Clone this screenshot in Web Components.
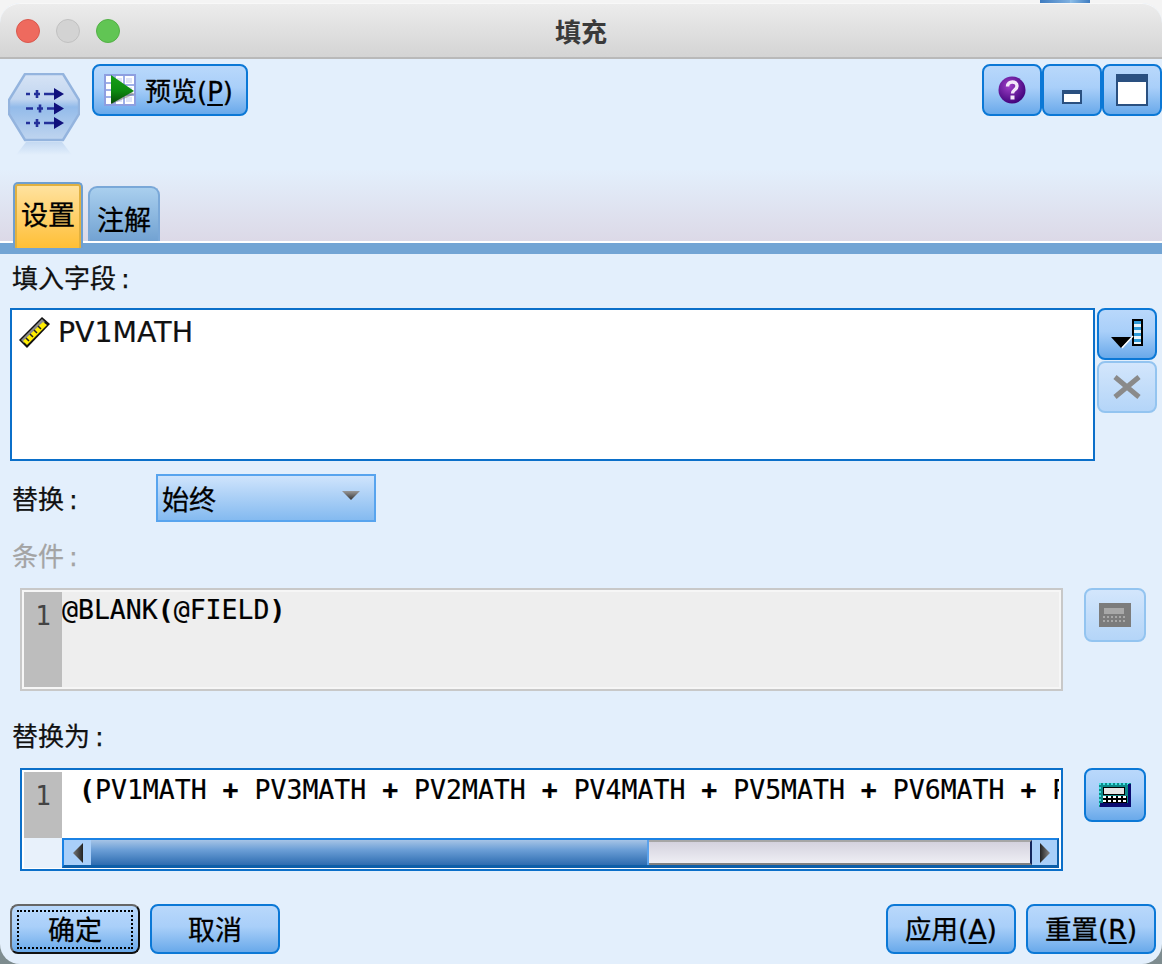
<!DOCTYPE html>
<html lang="zh">
<head>
<meta charset="utf-8">
<title>填充</title>
<style>
  html, body { margin: 0; padding: 0; }
  body {
    width: 1162px; height: 964px; overflow: hidden;
    font-family: "DejaVu Sans", "Noto Sans CJK SC", sans-serif;
    background:
      linear-gradient(90deg, #3f7cc0, #7fb0e0) 1040px 0 / 30px 3px no-repeat,
      linear-gradient(90deg, #8fc0ea, #3f7cc0) 1070px 0 / 20px 3px no-repeat,
      linear-gradient(#f4f4f4 0, #f4f4f4 30px, #8a9a9e 900px, #7d8b8e 100%);
  }
</style>
</head>
<body>

<template id="icon-preview">
  <svg width="32" height="32" viewBox="0 0 32 32" shape-rendering="crispEdges">
    <rect width="32" height="32" fill="#8e9fe0"/>
    <rect x="2" y="2" width="28" height="28" fill="#fff"/>
    <path d="M2 8h6v2H2zM2 15h6v2H2zM2 22h6v2H2zM10 2h2v28h-2zM19 2h2v28h-2zM12 10h18v2H12zM12 20h18v2H12zM8 2h2v28H8z" fill="#9fb0e8"/>
    <path d="M13 4h5v5h-5zM22 4h6v5h-6zM13 23h5v5h-5zM22 23h6v5h-6zM22 13h6v5h-6z" fill="#dfe4f8"/>
    <defs><linearGradient id="pg" x1="0" y1="0" x2="0" y2="1"><stop offset="0" stop-color="#17a017"/><stop offset=".55" stop-color="#0c8a10"/><stop offset="1" stop-color="#084a08"/></linearGradient></defs>
    <path d="M8 8 L31 20 L8 30 Z" fill="#777" opacity=".55" shape-rendering="auto"/>
    <path d="M7 1 L30 17 L7 30 Z" fill="url(#pg)" shape-rendering="auto"/>
  </svg>
</template>

<script>
const UI_FONT = '"DejaVu Sans", "Noto Sans CJK SC", sans-serif';

function icon(id) {
  return document.getElementById(id).innerHTML;
}

// 通用按钮，圆角蓝色渐变，带 disabled / focused 状态
class FxButton extends HTMLElement {
  constructor() {
    super();
    this.attachShadow({ mode: 'open' });
    this.shadowRoot.innerHTML = `
      <style>
        :host {
          display: inline-flex;
          box-sizing: border-box;
          width: var(--w, 130px);
          height: var(--h, 50px);
          flex: none;
          align-items: center;
          justify-content: center;
          gap: 6px;
          border: 2px solid #0b78d6;
          border-radius: 8px;
          background: linear-gradient(#b9d8fb, #a9cff9 45%, #69a9ea);
          color: #000;
          font: 27px/1 ${UI_FONT};
          -webkit-text-stroke: .3px #000;
          position: relative;
        }
        :host([disabled]) {
          border-color: #93c4f0;
          background: linear-gradient(#d3e6fc, #b4d5f8);
        }
        :host([focused]) {
          border-color: #666 #111 #111 #666;
        }
        :host([focused])::after {
          content: '';
          position: absolute;
          inset: 4px 5px 3px 5px;
          border: 2px dotted #000;
        }
      </style>
      <slot></slot>`;
  }
}
customElements.define('fx-button', FxButton);

class FxTitlebar extends HTMLElement {
  constructor() {
    super();
    this.attachShadow({ mode: 'open' });
    this.shadowRoot.innerHTML = `
      <style>
        :host {
          display: flex;
          box-sizing: border-box;
          height: 56px;
          flex: none;
          align-items: center;
          position: relative;
          background: linear-gradient(#ececec, #d4d4d4);
          border-top: 1px solid #f8f8f8;
          border-bottom: 2px solid #b9b9b9;
          border-radius: 20px 20px 0 0;
          padding-left: 16px;
          gap: 16px;
        }
        .dot { width: 24px; height: 24px; border-radius: 50%; box-sizing: border-box; margin-top: 1px; }
        .close { background: #ee6a5e; border: 1px solid #d9584d; }
        .min { background: #d3d3d3; border: 1px solid #c0c0c0; }
        .max { background: #61c554; border: 1px solid #53b046; }
        .title {
          position: absolute;
          left: 0; right: 0; top: 0; bottom: 0;
          display: flex; align-items: center; justify-content: center;
          font: 700 26px/1 "Noto Sans CJK SC", sans-serif;
          color: #3a3a3a;
        }
      </style>
      <span class="dot close"></span><span class="dot min"></span><span class="dot max"></span>
      <div class="title"><slot></slot></div>`;
  }
}
customElements.define('fx-titlebar', FxTitlebar);

class FxToolbar extends HTMLElement {
  constructor() {
    super();
    this.attachShadow({ mode: 'open' });
    this.shadowRoot.innerHTML = `
      <style>
        :host {
          display: flex;
          box-sizing: border-box;
          height: 110px;
          flex: none;
          padding: 5px 0 0 8px;
        }
        .node { margin-top: 9px; margin-right: 12px; flex: none; filter: blur(.5px); }
        .spacer { flex: 1; }
        fx-button { --h: 52px; --w: 60px; }
        fx-button.preview { --w: 156px; justify-content: flex-start; padding-left: 10px; gap: 9px; font-size: 26px; }
        .group { display: flex; }
        .lbl { white-space: nowrap; margin-top: 4px; }
        u { text-underline-offset: 3px; }
      </style>
      <svg class="node" width="72" height="84" viewBox="0 0 72 84">
        <defs>
          <linearGradient id="hx" x1="0" y1="0" x2="0" y2="1">
            <stop offset="0" stop-color="#d6e3f5"/><stop offset=".38" stop-color="#c2d6f0"/>
            <stop offset=".5" stop-color="#93bbea"/><stop offset="1" stop-color="#c0d5ef"/>
          </linearGradient>
          <linearGradient id="hr" x1="0" y1="0" x2="0" y2="1">
            <stop offset="0" stop-color="#c4d9f2"/><stop offset="1" stop-color="#e3effc"/>
          </linearGradient>
        </defs>
        <path d="M18 69 H54 L64 82 H8 Z" fill="url(#hr)"/>
        <path d="M17 1 H55 L71 27 V41 L55 67 H17 L1 41 V27 Z" fill="url(#hx)" stroke="#94b4de" stroke-width="2.400" stroke-linejoin="round"/>
        <g fill="none" stroke="#24309a" stroke-width="2.600">
          <path d="M18 21h4M26 21h6M29 17v8M36 21h14"/>
          <path d="M18 35.500h7M29 35.500h6M32 31.500v8M39 35.500h11"/>
          <path d="M18 50h4M26 50h6M29 46v8M36 50h14"/>
        </g>
        <path d="M46 15l10 6-10 6zM46 29.500l10 6-10 6zM46 44l10 6-10 6z" fill="#10107c"/>
      </svg>
      <fx-button class="preview">${icon('icon-preview')}<span class="lbl">预览(<u>P</u>)</span></fx-button>
      <div class="spacer"></div>
      <div class="group">
        <fx-button>
          <svg width="28" height="28" viewBox="0 0 28 28">
            <defs><radialGradient id="q" cx=".4" cy=".35" r=".7"><stop offset="0" stop-color="#a040c8"/><stop offset="1" stop-color="#3c0078"/></radialGradient></defs>
            <circle cx="14" cy="14" r="13.500" fill="url(#q)"/>
            <path d="M9.500 10.500c0-6 9.500-6 9.500-.5 0 4-4.500 3.500-4.500 7.500" fill="none" stroke="#f4e8fa" stroke-width="3.400"/>
            <rect x="12.500" y="19.500" width="4" height="4" fill="#f4e8fa"/>
          </svg>
        </fx-button>
        <fx-button style="align-items:flex-end;padding-bottom:10px">
          <svg width="20" height="14" viewBox="0 0 20 14" shape-rendering="crispEdges"><rect width="20" height="14" fill="#2a5080"/><rect x="2" y="4" width="16" height="8" fill="#fff"/></svg>
        </fx-button>
        <fx-button>
          <svg width="32" height="32" viewBox="0 0 32 32" shape-rendering="crispEdges"><rect width="32" height="32" fill="#2a5080"/><rect x="2" y="8" width="28" height="22" fill="#fff"/></svg>
        </fx-button>
      </div>`;
  }
}
customElements.define('fx-toolbar', FxToolbar);

class FxTabs extends HTMLElement {
  constructor() {
    super();
    this.attachShadow({ mode: 'open' });
    this.shadowRoot.innerHTML = `
      <style>
        :host {
          display: flex;
          flex: none;
          box-sizing: border-box;
          height: 85px;
          align-items: flex-start;
          padding: 13px 0 0 13px;
          gap: 5px;
          background:
            linear-gradient(#72a4d4, #72a4d4) bottom / 100% 11px no-repeat,
            linear-gradient(#fff, #fff) 0 72px / 100% 2px no-repeat,
            linear-gradient(#e3effc 0, #dcd9e7 72px) top / 100% 72px no-repeat;
        }
        .tab {
          box-sizing: border-box;
          display: flex; align-items: center; justify-content: center;
          font: 27px/1 "Noto Sans CJK SC", sans-serif;
          -webkit-text-stroke: .3px #000;
          color: #000;
          position: relative;
        }
        .on {
          width: 70px; height: 66px;
          border: 2px solid #6f9fd0;
          border-bottom: none;
          border-radius: 5px 5px 0 0;
          box-shadow: inset 0 2px 0 #e0b040, inset 2px 0 0 #e0b040, inset -2px 0 0 #e0b040;
          background: linear-gradient(#ffe3a2, #ffbf36);
          padding-bottom: 6px;
        }
        .off {
          width: 72px; height: 55px;
          margin-top: 4px;
          border: 2px solid #7aa8d8;
          border-bottom: none;
          border-radius: 9px 9px 0 0;
          background: linear-gradient(#a9cfee, #72a2d2);
          padding-top: 8px;
        }
      </style>
      <div class="tab on">设置</div>
      <div class="tab off">注解</div>`;
  }
}
customElements.define('fx-tabs', FxTabs);

// 代码编辑框：行号 + 内容
class FxEditor extends HTMLElement {
  constructor() {
    super();
    this.attachShadow({ mode: 'open' });
    this.shadowRoot.innerHTML = `
      <style>
        :host {
          display: grid;
          box-sizing: border-box;
          width: 1043px;
          height: 103px;
          flex: none;
          grid-template-columns: 38px 1fr;
          grid-template-rows: 66px 1fr;
          border: 2px solid #0b6fc9;
          padding: 2px;
          background: #fff;
          font: 26.500px/1 "DejaVu Sans Mono", monospace;
          -webkit-text-stroke: .2px #000;
          color: #000;
          overflow: hidden;
        }
        :host([disabled]) {
          border-color: #c8c8c8;
          background: #eee;
          box-shadow: inset 0 0 0 2px #f6f6f6;
          grid-template-rows: 1fr;
        }
        .gutter {
          background: #bdbdbd;
          color: #444;
          font-size: 26px;
          text-align: center;
          padding-top: 11px;
          box-sizing: border-box;
          -webkit-text-stroke: 0;
        }
        .code {
          white-space: pre;
          overflow: hidden;
          padding: 4px 0 0 var(--pad, 0);
          line-height: 28px;
        }
      </style>
      <div class="gutter">1</div>
      <div class="code"><slot></slot></div>
      <slot name="corner"></slot>
      <slot name="foot"></slot>`;
  }
}
customElements.define('fx-editor', FxEditor);

class FxScrollbar extends HTMLElement {
  constructor() {
    super();
    this.attachShadow({ mode: 'open' });
    this.shadowRoot.innerHTML = `
      <style>
        :host {
          display: flex;
          grid-column: 2;
          box-sizing: border-box;
          height: 30px;
          border-top: 2px solid #1b82e4;
          border-left: 2px solid #1b82e4;
          border-bottom: 3px solid #0d5ea8;
          border-right: 2px solid #0d5ea8;
          background: #e4e4ec;
        }
        .btn {
          width: 27px; flex: none;
          background: #a9cff9;
          display: flex; align-items: center; justify-content: center;
        }
        .thumb {
          width: 558px;
          flex: none;
          box-sizing: border-box;
          border-right: 2px solid #5aa2ec;
          background: linear-gradient(#a6c4e6, #6b9ed6 40%, #2d6cb0);
        }
        .rest {
          flex: 1;
          box-sizing: border-box;
          border-top: 2px solid #a6a6a6;
          border-bottom: 2px solid #808080;
          border-right: 2px solid #14265c;
          background: linear-gradient(#d4d2de, #eeeef4);
        }
      </style>
      <div class="btn">
        <svg width="10" height="20" viewBox="0 0 10 20"><defs><linearGradient id="al" x1="0" x2="1"><stop offset="0" stop-color="#777"/><stop offset="1" stop-color="#222"/></linearGradient></defs><path d="M0 10 10 0V20Z" fill="url(#al)"/></svg>
      </div>
      <div class="thumb"></div>
      <div class="rest"></div>
      <div class="btn" style="width:25px">
        <svg width="10" height="20" viewBox="0 0 10 20"><defs><linearGradient id="ar" x1="0" x2="1"><stop offset="0" stop-color="#222"/><stop offset="1" stop-color="#888"/></linearGradient></defs><path d="M10 10 0 0V20Z" fill="url(#ar)"/></svg>
      </div>`;
  }
}
customElements.define('fx-scrollbar', FxScrollbar);

class FxSelect extends HTMLElement {
  constructor() {
    super();
    this.attachShadow({ mode: 'open' });
    this.shadowRoot.innerHTML = `
      <style>
        :host {
          display: flex;
          box-sizing: border-box;
          width: 220px; height: 48px;
          flex: none;
          align-items: center;
          justify-content: space-between;
          padding: 0 14px 0 4px;
          border: 2px solid #58a4ee;
          background: linear-gradient(#cfe4fc, #84baf0);
          font: 27px/1 "Noto Sans CJK SC", sans-serif;
          -webkit-text-stroke: .3px #000;
          color: #000;
        }
        svg { margin-top: -5px; }
      </style>
      <slot></slot>
      <svg width="18" height="9" viewBox="0 0 18 9"><defs><linearGradient id="dd" x1="0" y1="0" x2="0" y2="1"><stop offset="0" stop-color="#999"/><stop offset="1" stop-color="#333"/></linearGradient></defs><path d="M0 0H18L9 9Z" fill="url(#dd)"/></svg>`;
  }
}
customElements.define('fx-select', FxSelect);

class FxFieldList extends HTMLElement {
  constructor() {
    super();
    this.attachShadow({ mode: 'open' });
    this.shadowRoot.innerHTML = `
      <style>
        :host {
          display: flex;
          box-sizing: border-box;
          width: 1085px; height: 153px;
          flex: none;
          align-items: flex-start;
          border: 2px solid #0b6fc9;
          background: #fff;
          padding: 6px 0 0 6px;
          gap: 8px;
          font: 28.400px/1 "DejaVu Sans", sans-serif;
          -webkit-text-stroke: .2px #111;
          color: #111;
        }
        .txt { margin-top: 3px; }
      </style>
      <svg width="32" height="32" viewBox="0 0 32 32">
        <path d="M1 24 24 1 32 8 9 32Z" fill="#111"/>
        <path d="M3 24 24 3 27 6 6 27Z" fill="#8a8a8a"/>
        <path d="M5 25 25 6 29 9 9 29Z" fill="#ffee00"/>
        <path d="M8 22l3 3M12 18l3 3M16 14l3 3M20 10l3 3" stroke="#222" stroke-width="1.500"/>
      </svg>
      <div class="txt"><slot></slot></div>`;
  }
}
customElements.define('fx-field-list', FxFieldList);

// 整个对话框内容
class FxDialog extends HTMLElement {
  constructor() {
    super();
    this.attachShadow({ mode: 'open' });
    this.shadowRoot.innerHTML = `
      <style>
        :host {
          display: flex;
          flex-direction: column;
          box-sizing: border-box;
          width: 1162px;
          height: 961px;
          margin-top: 3px;
          background: #e3effc;
          border-radius: 20px;
          overflow: hidden;
          font-family: ${UI_FONT};
        }
        .form { flex: 1; display: flex; flex-direction: column; padding: 0 6px 0 0; }
        .label { font-size: 26px; line-height: 40px; height: 40px; color: #111; -webkit-text-stroke: .25px #111; padding-left: 12px; flex: none; white-space: nowrap; }
        .label.off { color: #a4a4a4; -webkit-text-stroke: .25px #a4a4a4; }
        .c { margin-left: 5px; }
        .row { display: flex; flex: none; }
        fx-button.side { --w: 60px; --h: 52px; }
        .calc { --w: 62px; --h: 54px; }
        .stack { display: flex; flex-direction: column; gap: 1px; margin-left: 2px; }
        .foot { display: flex; justify-content: space-between; flex: none; padding: 0 0 0 10px; }
        .foot div { display: flex; gap: 10px; }
        .foot span { margin-top: 2px; }
        u { text-underline-offset: 3px; }
        b { font-weight: 700; }
      </style>
      <fx-titlebar>填充</fx-titlebar>
      <fx-toolbar></fx-toolbar>
      <fx-tabs></fx-tabs>
      <div class="form">
        <div class="label" style="margin-top:5px">填入字段<span class="c">:</span></div>
        <div class="row" style="margin:9px 0 0 10px">
          <fx-field-list>PV1MATH</fx-field-list>
          <div class="stack">
            <fx-button class="side">
              <svg width="32" height="30" viewBox="0 0 32 30" shape-rendering="crispEdges">
                <rect x="21" y="0" width="11" height="27" fill="#000"/>
                <path d="M23 2h7v3h-7zM23 8h7v3h-7zM23 14h7v3h-7zM23 20h7v3h-7z" fill="#2f9ad8"/>
                <path d="M23 5h7v3h-7zM23 11h7v3h-7zM23 17h7v3h-7zM23 23h7v2h-7z" fill="#e8f4fb"/>
                <path d="M0 18H21L10 29Z" fill="#000" shape-rendering="auto"/>
                <path d="M11 29 L22 17" stroke="#fff" stroke-width="1.500" fill="none" shape-rendering="auto"/>
              </svg>
            </fx-button>
            <fx-button class="side" disabled>
              <svg width="28" height="24" viewBox="0 0 28 24"><path d="M2 2 26 22M26 2 2 22" stroke="#8a8a8a" stroke-width="5"/></svg>
            </fx-button>
          </div>
        </div>
        <div class="row" style="margin-top:13px;align-items:center">
          <div class="label" style="width:144px;padding-top:5px;height:37px;line-height:37px;box-sizing:content-box">替换<span class="c">:</span></div>
          <fx-select>始终</fx-select>
        </div>
        <div class="label off" style="margin-top:13px;position:relative;top:2px">条件<span class="c">:</span></div>
        <div class="row" style="margin:13px 0 0 20px">
          <fx-editor disabled>@BLANK<b>(</b>@FIELD<b>)</b></fx-editor>
          <fx-button class="calc" disabled style="margin-left:21px">
            <svg width="32" height="24" viewBox="0 0 32 24" shape-rendering="crispEdges">
              <rect width="32" height="24" fill="#7c7c7c"/>
              <rect x="5" y="5" width="20" height="6" fill="#a8a8a8"/>
              <path d="M4 14h24M4 18h24" stroke="#a8a8a8" stroke-width="2" stroke-dasharray="2 2"/>
            </svg>
          </fx-button>
        </div>
        <div class="label" style="margin-top:26px">替换为<span class="c">:</span></div>
        <div class="row" style="margin:11px 0 0 20px">
          <fx-editor style="--pad:17px"><b>(</b>PV1MATH <b>+</b> PV3MATH <b>+</b> PV2MATH <b>+</b> PV4MATH <b>+</b> PV5MATH <b>+</b> PV6MATH <b>+</b> PV7MATH<div slot="corner" style="background:#e8f1fb"></div><fx-scrollbar slot="foot"></fx-scrollbar></fx-editor>
          <fx-button class="calc" style="margin-left:21px">
            <svg width="32" height="24" viewBox="0 0 32 24" shape-rendering="crispEdges">
              <rect width="32" height="24" fill="#0d8a8a"/>
              <path d="M0 1h32M1 0v24" stroke="#3fe0e0" stroke-width="2" stroke-dasharray="2 2"/>
              <rect x="1" y="20" width="31" height="4" fill="#0a0a70"/>
              <rect x="29" y="1" width="3" height="23" fill="#0a0a70"/>
              <rect x="4" y="4" width="22" height="8" fill="#000"/>
              <rect x="5" y="5" width="20" height="6" fill="#e4e4e4"/>
              <rect x="4" y="13" width="24" height="7" fill="#000"/>
              <path d="M4 14h24M4 18h24" stroke="#fff" stroke-width="2" stroke-dasharray="3 2"/>
            </svg>
          </fx-button>
        </div>
        <div class="foot" style="margin-top:33px">
          <div>
            <fx-button focused><span>确定</span></fx-button>
            <fx-button><span>取消</span></fx-button>
          </div>
          <div>
            <fx-button style="font-size:26.500px"><span>应用(<u>A</u>)</span></fx-button>
            <fx-button style="font-size:26.500px"><span>重置(<u>R</u>)</span></fx-button>
          </div>
        </div>
      </div>`;
  }
}
customElements.define('fx-dialog', FxDialog);
</script>

<fx-dialog></fx-dialog>
</body>
</html>
